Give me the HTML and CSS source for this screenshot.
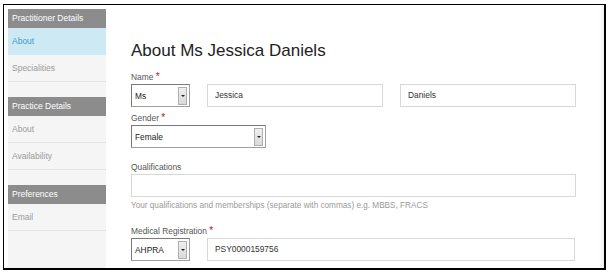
FILE: index.html
```html
<!DOCTYPE html>
<html lang="en">
<head>
<meta charset="UTF-8">
<title>About Ms Jessica Daniels</title>
<link rel="stylesheet" href="styles.css">
</head>
<body>
<div class="frame">
<div class="sidebar">
<div class="nav-head">Practitioner Details</div>
<div class="nav-item active">About</div>
<div class="nav-item">Specialities</div>
<div class="nav-head spaced">Practice Details</div>
<div class="nav-item">About</div>
<div class="nav-item">Availability</div>
<div class="nav-head spaced">Preferences</div>
<div class="nav-item">Email</div>
</div>
<div class="main">
<h1 class="title">About Ms Jessica Daniels</h1>
<div class="field">
<div class="label">Name <span class="req">*</span></div>
<div class="row">
<div class="select small"><span>Ms</span><b class="drop"></b></div>
<div class="input name">Jessica</div>
<div class="input name">Daniels</div>
</div>
</div>
<div class="field">
<div class="label">Gender <span class="req">*</span></div>
<div class="select wide"><span>Female</span><b class="drop"></b></div>
</div>
<div class="field gap">
<div class="label">Qualifications</div>
<div class="input full"></div>
<div class="help">Your qualifications and memberships (separate with commas) e.g. MBBS, FRACS</div>
</div>
<div class="field gap">
<div class="label">Medical Registration <span class="req">*</span></div>
<div class="row">
<div class="select small"><span>AHPRA</span><b class="drop"></b></div>
<div class="input grow">PSY0000159756</div>
</div>
</div>
</div>
<div class="edge"></div>
</div>
</body>
</html>
```
FILE: styles.css
```css
body {
margin: 0;
background: #fff;
font-family: "Liberation Sans", Arial, sans-serif;
}
.frame {
margin: 4px 0 0 3px;
width: 600px;
height: 263px;
border: 1px solid #000;
border-right-width: 2px;
border-bottom-width: 2px;
display: flex;
overflow: hidden;
}
.sidebar {
width: 98px;
margin: 4px 0 0 4px;
background: #f5f5f5;
}
.nav-head {
height: 19px;
line-height: 19px;
padding-left: 4px;
background: #8c8c8c;
color: #fff;
font-size: 8.5px;
}
.nav-head.spaced {
margin-top: 15px;
}
.nav-item {
height: 26px;
line-height: 26px;
padding-left: 4px;
font-size: 8.5px;
color: #9a9a9a;
border-bottom: 1px solid #e4e4e4;
}
.nav-item.active {
background: #cde9f3;
color: #3c9cc4;
border-bottom-color: #cde9f3;
}
.main {
flex: 1;
padding: 0 0 0 25px;
}
.title {
margin: 36px 0 8px;
font-size: 17px;
font-weight: normal;
color: #222;
line-height: 20px;
}
.field {
margin-bottom: 3px;
}
.field.gap {
margin-top: 11px;
}
.label {
font-size: 8.4px;
height: 14px;
line-height: 16px;
color: #555;
margin-bottom: 1px;
}
.req {
color: #d0021b;
font-size: 10px;
}
.row {
display: flex;
gap: 17px;
}
.select {
height: 23px;
box-sizing: border-box;
border: 1px solid #a0a0a0;
border-top-color: #7a7a7a;
border-left-color: #7a7a7a;
background: #fff;
display: flex;
align-items: center;
justify-content: space-between;
padding: 0 2px 0 3px;
font-size: 8.4px;
color: #222;
}
.select.small {
width: 59px;
}
.select.wide {
width: 135px;
}
.drop {
width: 9px;
height: 18px;
box-sizing: border-box;
border: 1px solid #b0b0b0;
background: linear-gradient(#efefef, #d9d9d9);
position: relative;
}
.drop::after {
content: "";
position: absolute;
left: 2px;
top: 7px;
border-left: 2px solid transparent;
border-right: 2px solid transparent;
border-top: 2px solid #222;
}
.input {
height: 23px;
box-sizing: border-box;
border: 1px solid #d8d8d8;
background: #fff;
font-size: 8.4px;
color: #333;
line-height: 21px;
padding-left: 7px;
}
.input.name {
width: 176px;
}
.input.full {
width: 445px;
}
.input.grow {
width: 368px;
}
.help {
font-size: 8.2px;
color: #9a9a9a;
line-height: 13px;
margin-top: 2px;
}
.edge {
width: 5px;
background: linear-gradient(to right, #fff, #f0f0f0);
}
```
